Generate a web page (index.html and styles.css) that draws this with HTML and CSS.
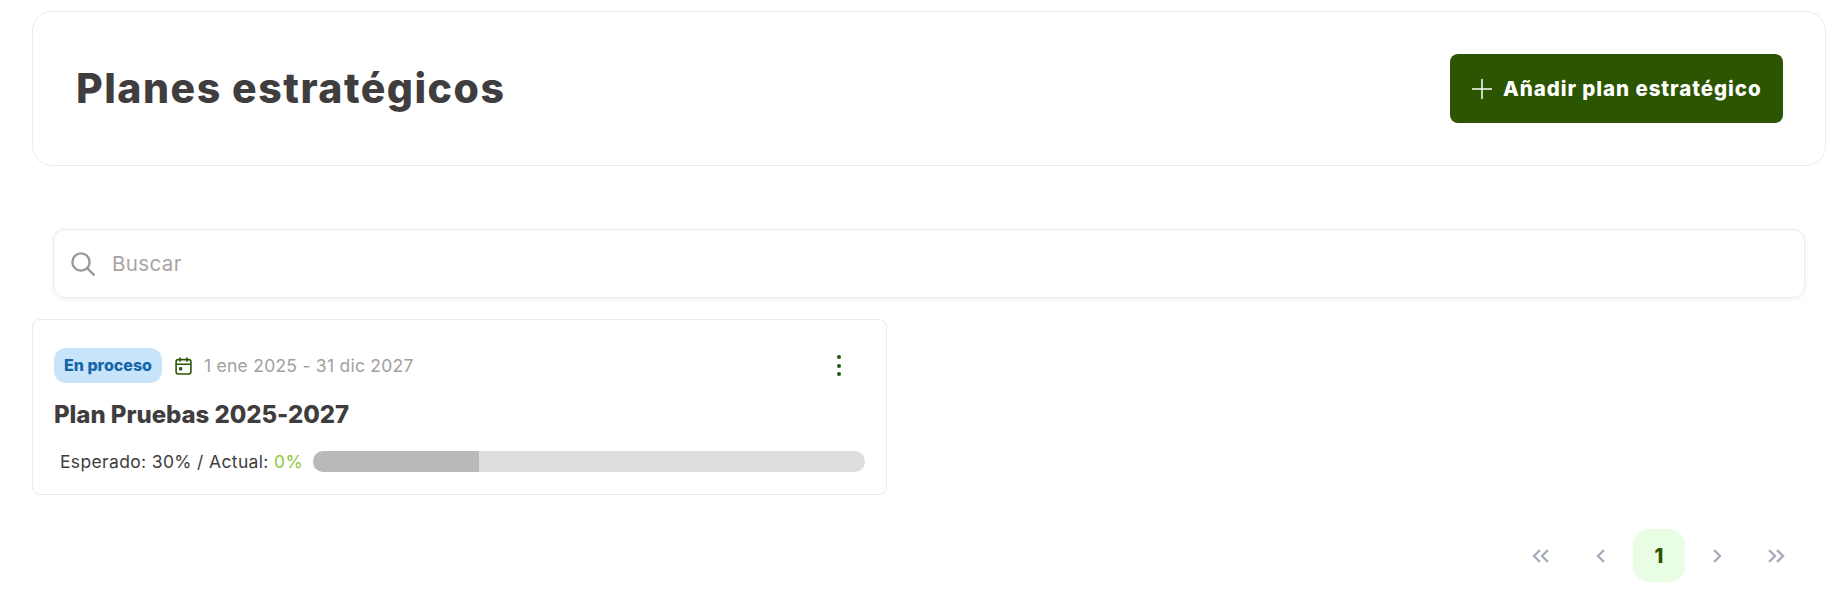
FILE: index.html
```html
<!DOCTYPE html>
<html lang="es">
<head>
<meta charset="utf-8">
<title>Planes estratégicos</title>
<link rel="stylesheet" href="styles.css">
</head>
<body>
<main class="page">
  <header class="hero">
    <h1 class="hero-title">Planes estratégicos</h1>
    <button class="add-btn" type="button">
      <svg class="add-icon" viewBox="0 0 20 20" aria-hidden="true"><path d="M10 0v20M0 10h20"/></svg>
      <span>Añadir plan estratégico</span>
    </button>
  </header>
  <div class="search">
    <svg class="search-icon" viewBox="0 0 24 24" aria-hidden="true"><circle cx="10" cy="10" r="8.6"/><path d="M16.2 16.2 23.5 23.5"/></svg>
    <span class="search-text">Buscar</span>
  </div>
  <article class="card">
    <div class="card-top">
      <span class="badge">En proceso</span>
      <svg class="cal-icon" viewBox="0 0 16 17" aria-hidden="true"><rect x="1" y="2.5" width="14" height="13.5" rx="2"/><path d="M1 6.8h14M4.8 .5v4M11.2 .5v4"/><rect class="cal-dot" x="3.8" y="9.6" width="3" height="3"/></svg>
      <span class="dates">1 ene 2025 - 31 dic 2027</span>
      <span class="kebab" aria-hidden="true"><i></i><i></i><i></i></span>
    </div>
    <h2 class="card-title">Plan Pruebas 2025-2027</h2>
    <div class="progress-row">
      <span class="progress-label">Esperado: 30% / Actual: <b class="actual">0%</b></span>
      <div class="bar"><div class="bar-fill" style="width:30%"></div></div>
    </div>
  </article>
  <nav class="pager">
    <svg class="pg pg-wide pg-first" viewBox="0 0 18 14" aria-hidden="true"><path d="M8 1 2 7l6 6M16 1l-6 6 6 6"/></svg>
    <svg class="pg pg-prev" viewBox="0 0 10 14" aria-hidden="true"><path d="M8 1 2 7l6 6"/></svg>
    <span class="pg-current">1</span>
    <svg class="pg pg-next" viewBox="0 0 10 14" aria-hidden="true"><path d="m2 1 6 6-6 6"/></svg>
    <svg class="pg pg-wide pg-last" viewBox="0 0 18 14" aria-hidden="true"><path d="m2 1 6 6-6 6M10 1l6 6-6 6"/></svg>
  </nav>
</main>
</body>
</html>
```
FILE: styles.css
```css
* { box-sizing: border-box; }
html, body { margin: 0; background: #fff; }
body { font-family: "Inter", "Open Sans", "Liberation Sans", sans-serif; color: #3f3d3d; overflow: hidden; }
.page { width: 1829px; height: 603px; padding: 11px 3px 0 32px; }
.hero { height: 155px; border: 1px solid #e8eaee; border-radius: 20px; display: flex; align-items: center; justify-content: space-between; padding: 0 42px 0 43px; }
.hero-title { margin: 0; font-size: 41px; font-weight: 800; letter-spacing: 1.5px; line-height: 1; }
.add-btn { width: 333px; height: 69px; border: 0; border-radius: 8px; background: #2b5500; color: #fff; font: 800 20.5px "Inter", sans-serif; letter-spacing: .93px; display: flex; align-items: center; gap: 11px; padding: 0 0 0 22px; }
.add-icon { width: 20px; height: 20px; fill: none; stroke: #fff; stroke-width: 1.5; flex: none; }
.search { margin: 63px 0 0 21px; width: 1752px; height: 69px; border: 1px solid #e8eaee; border-radius: 12px; box-shadow: 0 1px 4px rgba(30,50,90,.08); display: flex; align-items: center; padding-left: 17px; }
.search-icon { width: 24px; height: 24px; fill: none; stroke: #9a9a9a; stroke-width: 2.4; flex: none; }
.search-text { margin-left: 17px; font-size: 20.5px; letter-spacing: .4px; color: #a8a4a4; }
.card { margin-top: 21px; width: 855px; height: 176px; border: 1px solid #e8eaee; border-radius: 8px; padding: 28px 21px 0 21px; }
.card-top { display: flex; align-items: center; height: 35px; }
.badge { width: 108px; height: 35px; padding-bottom: 2px; border-radius: 12px; background: #c8e4fb; color: #1565a8; font-size: 16px; font-weight: 800; display: flex; align-items: center; justify-content: center; }
.cal-icon { margin-left: 13px; width: 17px; height: 18px; fill: none; stroke: #2b5500; stroke-width: 1.5; flex: none; }
.cal-dot { fill: #2b5500; stroke: none; }
.dates { margin-left: 12px; font-size: 17.5px; letter-spacing: .25px; color: #a3a0a0; }
.kebab { margin-left: auto; margin-right: 24px; display: flex; flex-direction: column; gap: 4.5px; }
.kebab i { width: 4px; height: 4px; border-radius: 50%; background: #1f5a00; }
.card-title { margin: 17px 0 0; font-size: 24px; font-weight: 800; letter-spacing: -.05px; line-height: 30px; }
.progress-row { margin-top: 21px; display: flex; align-items: center; height: 21px; }
.progress-label { margin-left: 6px; width: 253px; font-size: 17.5px; letter-spacing: .35px; white-space: nowrap; }
.actual { font-weight: 400; color: #8fc93a; }
.bar { width: 552px; height: 21px; border-radius: 11px; background: #dedede; overflow: hidden; }
.bar-fill { height: 100%; background: #b9b9b9; }
.pager { margin: 34px 0 0 1488px; width: 280px; height: 53px; display: flex; align-items: center; }
.pg { width: 10px; height: 16px; fill: none; stroke: #a5adbd; stroke-width: 2.4; flex: none; }
.pg-wide { width: 18px; }
.pg-first { margin-left: 12px; }
.pg-prev { margin-left: 46px; }
.pg-current { margin-left: 27px; width: 52px; height: 53px; border-radius: 16px; background: #e9fde4; color: #2b5500; font-size: 20px; font-weight: 800; display: flex; align-items: center; justify-content: center; flex: none; }
.pg-next { margin-left: 27px; }
.pg-last { margin-left: 45px; }
```
